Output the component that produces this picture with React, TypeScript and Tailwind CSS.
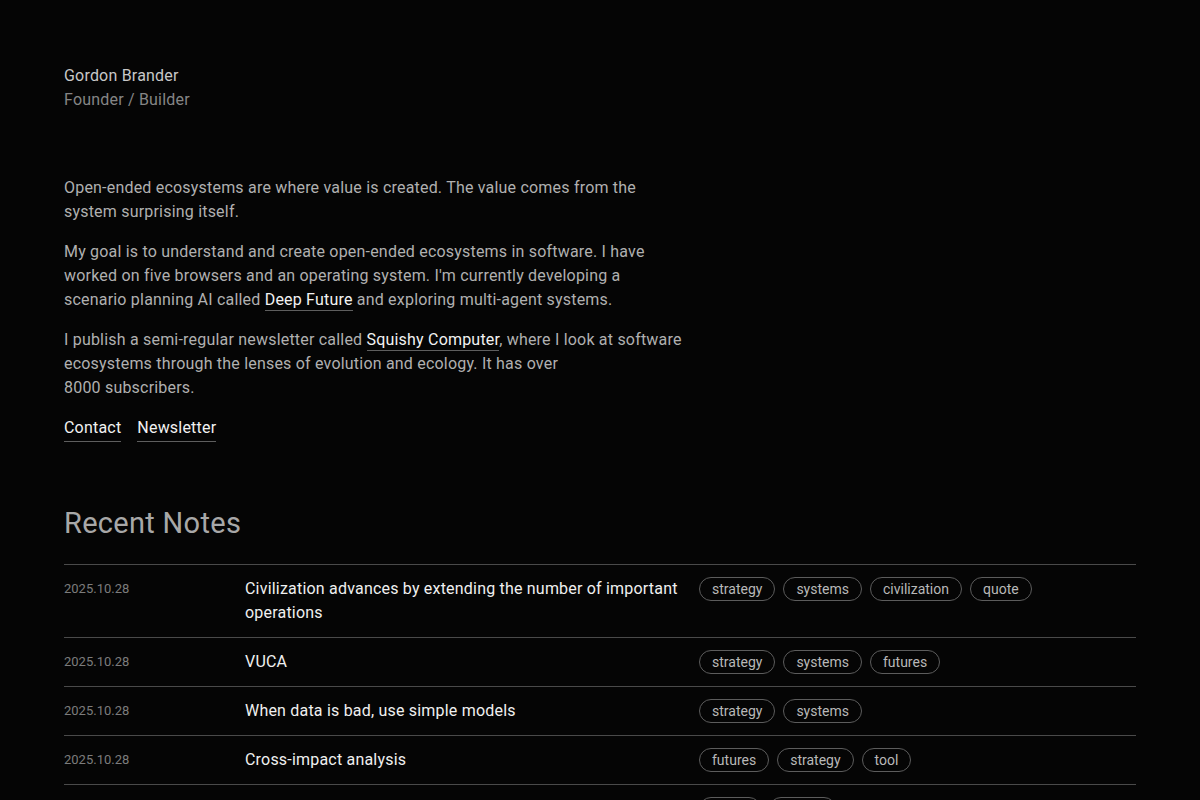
import React from "react"

const notes = [
  {
    date: "2025.10.28",
    title: "Civilization advances by extending the number of important operations",
    tags: ["strategy", "systems", "civilization", "quote"],
  },
  { date: "2025.10.28", title: "VUCA", tags: ["strategy", "systems", "futures"] },
  { date: "2025.10.28", title: "When data is bad, use simple models", tags: ["strategy", "systems"] },
  { date: "2025.10.28", title: "Cross-impact analysis", tags: ["futures", "strategy", "tool"] },
  { date: "2025.10.28", title: "Scenarios are not predictions", tags: ["quote", "design"] },
]

const Link = ({ children }: { children: React.ReactNode }) => (
  <a href="#" className="border-b border-[#5e5e5e] pb-[1px] text-[#f2f2f2]">
    {children}
  </a>
)

const Tag = ({ label }: { label: string }) => (
  <span className="rounded-full border border-[#5c5c5c] px-3 text-[14px] leading-[22px] tracking-normal text-[#b8b8b8]">
    {label}
  </span>
)

const App = () => {
  return (
    <div
      className="min-h-[800px] bg-[#050505] px-16 pt-16 pb-10 text-[16px] leading-6 tracking-[0.2px] text-[#b0b0b0]"
      style={{ fontFamily: "Roboto, 'Open Sans', sans-serif" }}
    >
      <header>
        <div className="text-[#c8c8c8]">Gordon Brander</div>
        <div className="text-[#858585]">Founder / Builder</div>
      </header>

      <section className="mt-16 flex max-w-[620px] flex-col gap-4">
        <p>Open-ended ecosystems are where value is created. The value comes from the system surprising itself.</p>
        <p>
          My goal is to understand and create open-ended ecosystems in software. I have worked on five browsers and an
          operating system. I'm currently developing a scenario planning AI called <Link>Deep Future</Link> and
          exploring multi-agent systems.
        </p>
        <p>
          I publish a semi-regular newsletter called <Link>Squishy Computer</Link>, where I look at software ecosystems
          through the lenses of evolution and ecology. It has over
          <br />
          8000 subscribers.
        </p>
        <nav className="flex gap-4">
          <Link>Contact</Link>
          <Link>Newsletter</Link>
        </nav>
      </section>

      <h2 className="mt-[63px] text-[29px] leading-9 tracking-[0.3px] text-[#a8a8a8]">Recent Notes</h2>

      <div className="mt-[23px] border-t border-[#4a4a4a]">
        {notes.map((n, i) => (
          <div key={i} className="grid grid-cols-[181px_454px_1fr] border-b border-[#4a4a4a] py-3">
            <div className="text-[13px] tracking-normal text-[#7c7c7c]">{n.date}</div>
            <div className="pr-4 text-[#f0f0f0]">{n.title}</div>
            <div className="flex flex-wrap items-start gap-2">
              {n.tags.map((t) => (
                <Tag key={t} label={t} />
              ))}
            </div>
          </div>
        ))}
      </div>
    </div>
  )
}

export default App
